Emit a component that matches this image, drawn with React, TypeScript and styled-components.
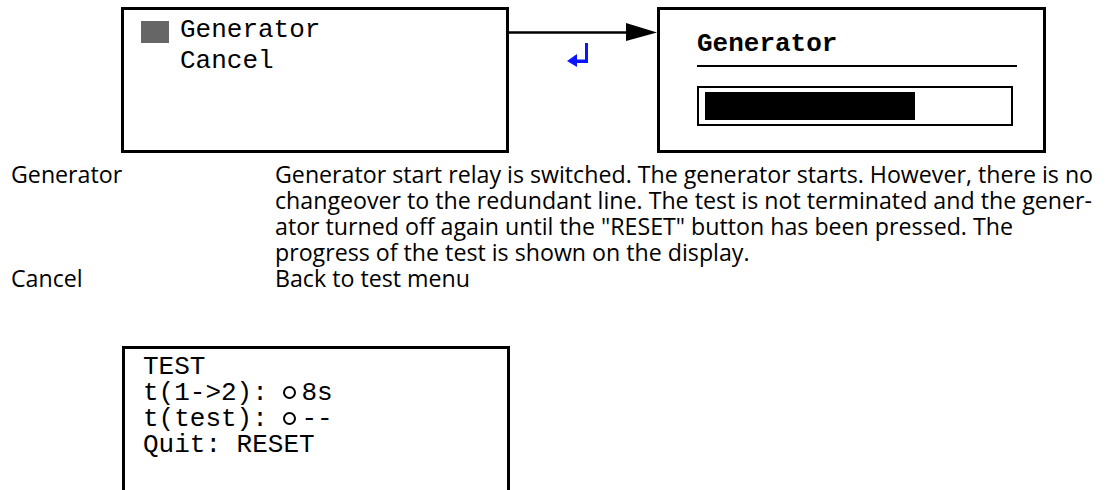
import React from "react";
import styled, { createGlobalStyle } from "styled-components";

const GlobalStyle = createGlobalStyle`
  html, body {
    margin: 0;
    padding: 0;
    background: #fff;
    overflow: hidden;
  }
  body {
    color: #000;
    font-family: "Open Sans", "Liberation Sans", sans-serif;
  }
`;

const Page = styled.div`
  width: 1118px;
  height: 490px;
  padding: 7px 0 0 11px;
  box-sizing: border-box;
`;

const DiagramRow = styled.div`
  display: flex;
  align-items: flex-start;
  margin-left: 110px;
`;

const Screen = styled.div<{ $w: number }>`
  width: ${(p) => p.$w}px;
  height: 146px;
  box-sizing: border-box;
  border: 3px solid #000;
  font-family: "Liberation Mono", "DejaVu Sans Mono", monospace;
  font-size: 26px;
  color: #000;
`;

const MenuList = styled.div`
  padding: 5px 0 0 17px;
  display: flex;
  flex-direction: column;
`;

const MenuItem = styled.div`
  display: flex;
  align-items: center;
  height: 31px;
  line-height: 31px;
`;

const Cursor = styled.span<{ $on: boolean }>`
  width: 28px;
  height: 22px;
  margin: 3px 11px 0 0;
  background: ${(p) => (p.$on ? "#666" : "transparent")};
  flex: none;
`;

const Connector = styled.div`
  width: 148px;
  display: flex;
  flex-direction: column;
`;

const ArrowSvg = styled.svg`
  display: block;
  margin-top: 16px;
`;

const ReturnIcon = styled.svg`
  display: block;
  margin: 2px 0 0 58px;
`;

const ProgressBody = styled.div`
  padding: 21px 26px 0 37px;
`;

const ScreenTitle = styled.div`
  font-weight: bold;
  line-height: 26px;
  padding-bottom: 8px;
  border-bottom: 2px solid #000;
`;

const ProgressTrack = styled.div`
  margin-top: 19px;
  width: 316px;
  height: 40px;
  box-sizing: border-box;
  border: 2px solid #000;
  padding: 4px 6px;
`;

const ProgressFill = styled.div`
  height: 100%;
  background: #000;
`;

const DescList = styled.div`
  display: grid;
  grid-template-columns: 264px 1fr;
  margin-top: 8px;
  font-size: 23.2px;
  line-height: 26px;
`;

const Term = styled.div``;

const Definition = styled.div``;

const Line = styled.span`
  display: block;
  white-space: nowrap;
`;

const TestScreen = styled.div`
  margin: 55px 0 0 111px;
  width: 388px;
  height: 160px;
  box-sizing: border-box;
  border: 3px solid #000;
  padding: 5px 0 0 18px;
  font-family: "Liberation Mono", "DejaVu Sans Mono", monospace;
  font-size: 26px;
  line-height: 26px;
`;

const TestLine = styled.div`
  white-space: pre;
  display: flex;
  align-items: center;
  height: 26px;
`;

const Lamp = styled.span`
  display: inline-block;
  flex: none;
  width: 18px;
  height: 26px;
  position: relative;
  &::before {
    content: "";
    position: absolute;
    left: 0;
    top: 6px;
    width: 13px;
    height: 13px;
    box-sizing: border-box;
    border: 2px solid #000;
    border-radius: 50%;
  }
`;

const descLines = [
  "Generator start relay is switched. The generator starts. However, there is no",
  "changeover to the redundant line. The test is not terminated and the gener-",
  'ator turned off again until the "RESET" button has been pressed. The',
  "progress of the test is shown on the display.",
];

export default function App() {
  const progress = 70;
  return (
    <Page>
      <GlobalStyle />
      <DiagramRow>
        <Screen $w={388}>
          <MenuList>
            <MenuItem>
              <Cursor $on />
              Generator
            </MenuItem>
            <MenuItem>
              <Cursor $on={false} />
              Cancel
            </MenuItem>
          </MenuList>
        </Screen>
        <Connector>
          <ArrowSvg width="148" height="18" viewBox="0 0 148 18">
            <line x1="0" y1="9.5" x2="120" y2="9.5" stroke="#000" strokeWidth="2.5" />
            <polygon points="117,0 148,9.5 117,18" fill="#000" />
          </ArrowSvg>
          <ReturnIcon width="22" height="24" viewBox="0 0 22 24">
            <rect x="18" y="0" width="3" height="20" fill="#0a14ff" />
            <rect x="8" y="16.5" width="13" height="3.5" fill="#0a14ff" />
            <polygon points="0,18 10,11 10,24" fill="#0a14ff" />
          </ReturnIcon>
        </Connector>
        <Screen $w={389}>
          <ProgressBody>
            <ScreenTitle>Generator</ScreenTitle>
            <ProgressTrack>
              <ProgressFill style={{ width: `${progress}%` }} />
            </ProgressTrack>
          </ProgressBody>
        </Screen>
      </DiagramRow>

      <DescList>
        <Term>Generator</Term>
        <Definition>
          {descLines.map((l) => (
            <Line key={l}>{l}</Line>
          ))}
        </Definition>
        <Term>Cancel</Term>
        <Definition>Back to test menu</Definition>
      </DescList>

      <TestScreen>
        <TestLine>TEST</TestLine>
        <TestLine>
          {"t(1->2): "}
          <Lamp />
          8s
        </TestLine>
        <TestLine>
          {"t(test): "}
          <Lamp />
          --
        </TestLine>
        <TestLine>Quit: RESET</TestLine>
      </TestScreen>
    </Page>
  );
}
